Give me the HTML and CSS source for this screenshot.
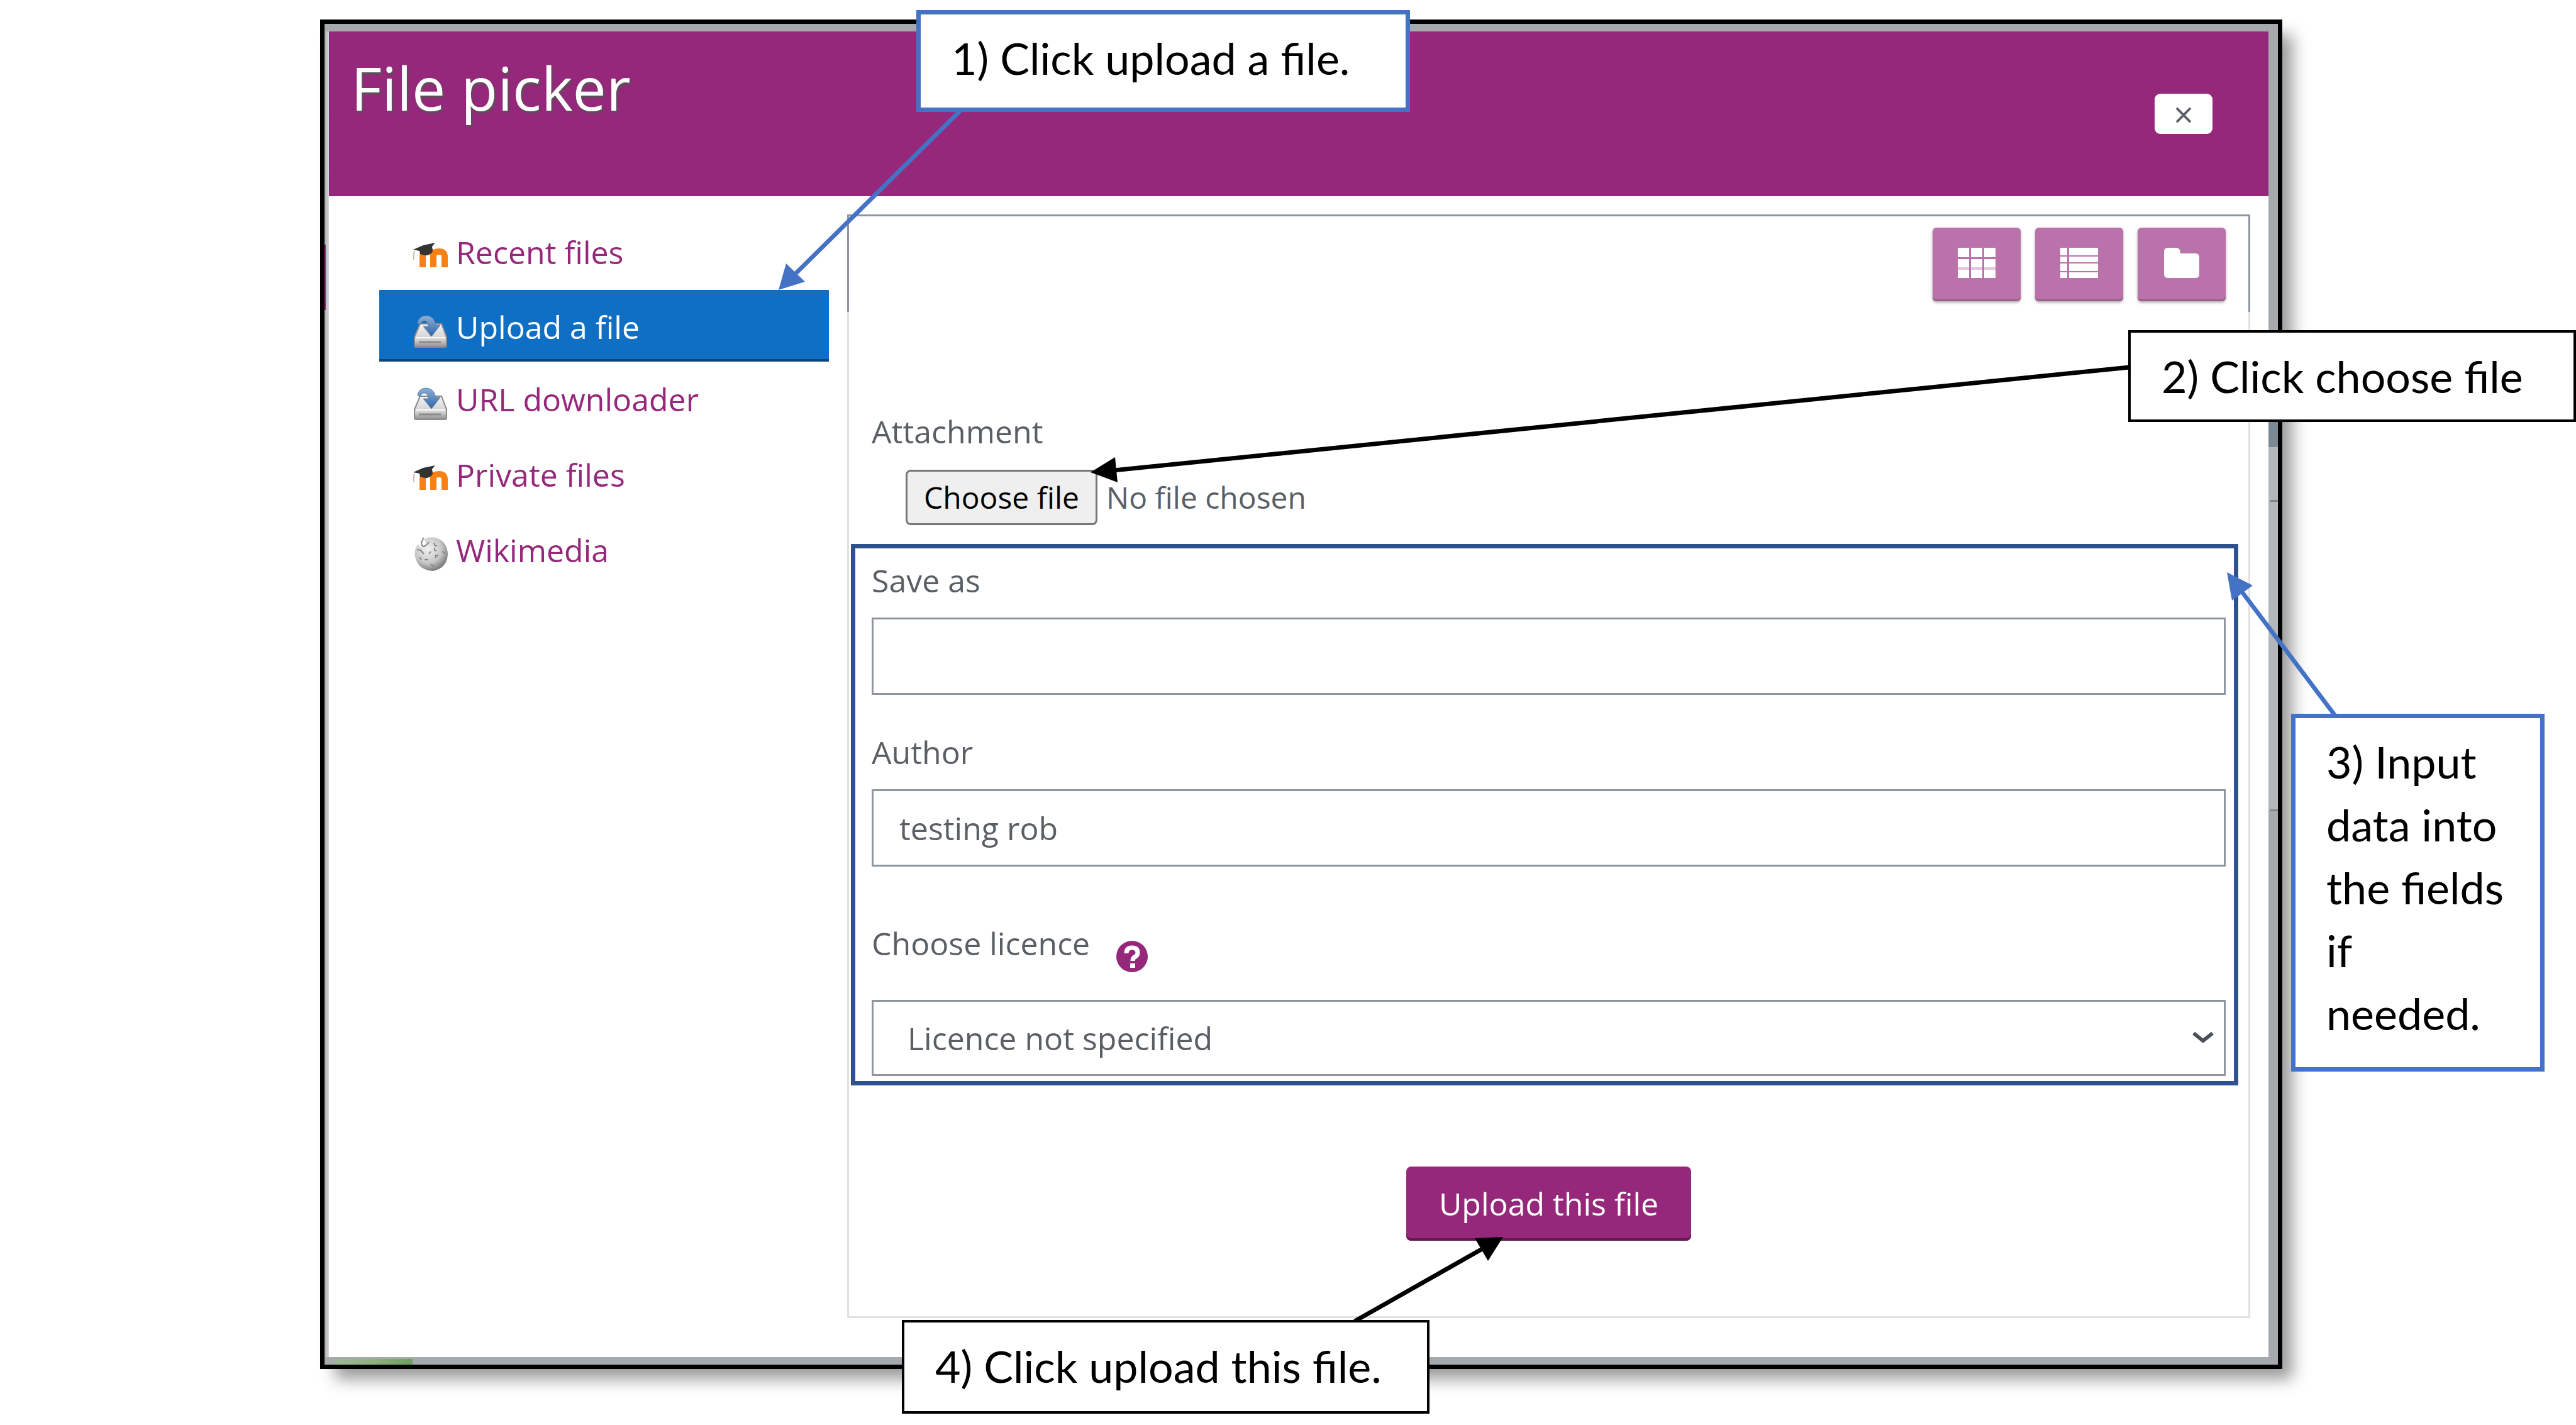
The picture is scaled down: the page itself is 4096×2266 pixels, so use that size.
FILE: index.html
```html
<!DOCTYPE html>
<html lang="en">
<head>
<meta charset="utf-8">
<title>File picker</title>
<link rel="stylesheet" href="styles.css">
</head>
<body>
<svg class="defs" aria-hidden="true">
  <defs>
    <linearGradient id="drive" x1="0" y1="0" x2="0" y2="1"><stop offset="0" stop-color="#f4f4f4"/><stop offset=".7" stop-color="#cfcfcf"/><stop offset="1" stop-color="#8d8d8d"/></linearGradient>
    <linearGradient id="arrow" x1="0" y1="0" x2="0" y2="1"><stop offset="0" stop-color="#8fb0d4"/><stop offset="1" stop-color="#2f64a8"/></linearGradient>
    <radialGradient id="globe" cx=".4" cy=".35" r=".7"><stop offset="0" stop-color="#f2f2f2"/><stop offset=".6" stop-color="#c6c6c6"/><stop offset="1" stop-color="#6e6e6e"/></radialGradient>
    <symbol id="moodle" viewBox="0 0 56 56">
      <path d="M15 46V29q0-9 9-9 8 0 8 9v17M32 46V29q0-8 9-8 9 0 9 8v17" fill="none" stroke="#f98012" stroke-width="10"/>
      <path d="M0 18 16 11 35 7 30 13 31 21Q26 28 18 27L11 25 10 20Z" fill="#333"/>
      <path d="M2 20Q0 28 1 34" fill="none" stroke="#d9b8a6" stroke-width="2"/>
    </symbol>
    <symbol id="drive-icon" viewBox="0 0 56 56">
      <path d="M11 17H45L53 38V51Q53 54 50 54H5Q2 54 2 51V38Z" fill="url(#drive)" stroke="#8a8a8a" stroke-width="2"/>
      <path d="M4 39H51" stroke="#fafafa" stroke-width="2"/>
      <path d="M9 46H44" stroke="#8c8c8c" stroke-width="3"/>
      <path d="M7 16Q8 5 20 4 33 4 36 19H43L29 37 16 21H24Q24 12 17 12 12 13 11 18Z" fill="url(#arrow)" stroke="#5c83b3" stroke-width="1"/>
    </symbol>
    <symbol id="wiki" viewBox="0 0 56 56">
      <path d="M18 4Q26 0 36 2 54 8 55 28 54 50 32 55 8 54 3 32 1 20 8 12L12 18 20 14Z" fill="url(#globe)"/>
      <path d="M17 2Q10 12 16 16 22 14 25 9M6 21l6 1 5 6M33 10q1 6 5 5M34 18q-1 5 3 5M40 31q-6-3-4 3M18 37h6M28 24l-3 4M46 24l5 3M28 44l5 4M10 33l3 4" fill="none" stroke="#858585" stroke-width="2"/>
    </symbol>
  </defs>
</svg>
<div class="stage">
  <main class="picker">
    <header class="picker-head">
      <h1>File picker</h1>
      <button class="close" type="button" aria-label="Close">×</button>
    </header>
    <div class="picker-body">
      <nav class="repos" aria-label="Repositories">
        <a class="repo" href="#recent"><svg><use href="#moodle"/></svg>Recent files</a>
        <a class="repo active" href="#upload"><svg><use href="#drive-icon"/></svg>Upload a file</a>
        <a class="repo" href="#url"><svg><use href="#drive-icon"/></svg>URL downloader</a>
        <a class="repo" href="#private"><svg><use href="#moodle"/></svg>Private files</a>
        <a class="repo" href="#wikimedia"><svg><use href="#wiki"/></svg>Wikimedia</a>
      </nav>
      <section class="panel">
        <div class="toolbar">
          <button type="button" aria-label="Icon view"><svg viewBox="0 0 60 48"><path d="M0 0h18v15H0zM21 0h18v15H21zM42 0h18v15H42zM0 18h18v13H0zM21 18h18v13H21zM42 18h18v13H42zM0 35h18v13H0zM21 35h18v13H21zM42 35h18v13H42z"/><path opacity=".6" d="M0 31h18v4H0zM21 31h18v4H21zM42 31h18v4H42z"/></svg></button>
          <button type="button" aria-label="List view"><svg viewBox="0 0 60 48"><path d="M0 0h11v12H0zM14 0h46v12H14zM0 14h11v9H0zM14 14h46v9H14zM0 25h11v12H0zM14 25h46v12H14zM0 39h11v9H0zM14 39h46v9H14z"/></svg></button>
          <button type="button" aria-label="Tree view"><svg viewBox="0 0 60 48"><path d="M2 6q0-6 6-6h13q7 0 7 9h24q6 0 6 6v27q0 6-6 6H8q-6 0-6-6z"/></svg></button>
        </div>
        <form class="upload">
          <label class="attachment" for="file">Attachment</label>
          <div class="chooser">
            <input id="file" class="visually-hidden" type="file">
            <label class="choose" for="file">Choose file</label>
            <span>No file chosen</span>
          </div>
          <div class="fields">
            <div class="field">
              <label for="saveas">Save as</label>
              <input id="saveas" type="text">
            </div>
            <div class="field">
              <label for="author">Author</label>
              <input id="author" type="text" value="testing rob">
            </div>
            <div class="field licence">
              <div class="label-row">
                <label for="licence">Choose licence</label>
                <svg class="help" viewBox="0 0 50 50" role="img" aria-label="Help"><circle cx="25" cy="25" r="25" fill="#95287a"/><path d="M16 20Q16 11 25 11 34 11 34 19 34 24 29 26 26 28 26 32" fill="none" stroke="#fff" stroke-width="7"/><path d="M22 36h8v7h-8z" fill="#fff"/></svg>
              </div>
              <div class="select-wrap">
                <select id="licence"><option>Licence not specified</option></select>
                <svg viewBox="0 0 36 22" aria-hidden="true"><path d="M3 4 18 16 33 4" fill="none" stroke="#495057" stroke-width="6"/></svg>
              </div>
            </div>
          </div>
          <button class="submit" type="submit">Upload this file</button>
        </form>
      </section>
    </div>
  </main>

  <svg class="arrows" viewBox="0 0 4096 2266" aria-hidden="true">
    <g fill="#4472c4" stroke="#4472c4">
      <path d="M1527 176 1262 438M3713 1138 3564 940" stroke-width="7"/>
      <path d="M1238 461 1250 419 1280 448ZM3541 910 3582 931 3549 955Z" stroke="none"/>
    </g>
    <g fill="#000" stroke="#000">
      <path d="M3386 584 1770 748M2154 2101 2362 1983" stroke-width="7"/>
      <path d="M1734 751 1773 727 1777 767ZM2390 1967 2345 1969 2366 2005Z" stroke="none"/>
    </g>
  </svg>
  <p class="callout blue step1">1) Click upload a file.</p>
  <p class="callout step2">2) Click choose file</p>
  <p class="callout blue step3">3) Input<br>data into<br>the fields<br>if<br>needed.</p>
  <p class="callout step4">4) Click upload this file.</p>
</div>
</body>
</html>
```
FILE: styles.css
```css
* { box-sizing: border-box; }

body {
  margin: 0;
  background: #fff;
  color: #5a5f65;
  font: 50px/68px "Open Sans", sans-serif;
}

button, input, select { font: inherit; color: inherit; }

.defs { position: absolute; width: 0; height: 0; }

.stage {
  position: relative;
  min-height: 100vh;
  padding: 31px 467px 88px 509px;
  overflow: hidden;
}

/* Dialog frame; the gutter shows slivers of the dimmed page behind it */
.picker {
  padding: 12px 15px 12px 7px;
  border: 7px solid #000;
  background:
    linear-gradient(90deg, #9db89a, #8fb07f 50%, #6d9f60) 16px 100% / 124px 9px no-repeat,
    linear-gradient(#95287a, #95287a) 0 351px / 2px 104px no-repeat,
    linear-gradient(#7b8995, #7b8995) 100% 517px / 15px 156px no-repeat,
    linear-gradient(#7e858c, #7e858c) 100% 757px / 13px 3px no-repeat,
    linear-gradient(#7e858c, #7e858c) 100% 1249px / 13px 3px no-repeat,
    linear-gradient(#b3b7ba, #b3b7ba) 100% 673px / 15px 577px no-repeat,
    linear-gradient(90deg, #aaa, #d8d8dc) 0 12px / 7px 2108px no-repeat,
    #a6aaad;
  box-shadow: 20px 20px 24px -4px rgba(0, 0, 0, .4);
}

.picker-head {
  display: flex;
  justify-content: space-between;
  align-items: flex-start;
  min-height: 262px;
  padding: 25px 89px 0 35px;
  background: #95287a;
}

.picker-head h1 {
  margin: 0;
  color: #fff;
  font-size: 95px;
  font-weight: 400;
  line-height: 128px;
  text-shadow: 2px 3px 3px #555;
}

.close {
  width: 92px;
  height: 64px;
  margin-top: 74px;
  padding: 0;
  border: 0;
  border-radius: 9px;
  background: #fff;
  font-size: 56px;
  line-height: 64px;
}

.picker-body {
  display: grid;
  grid-template-columns: 715px 1fr;
  gap: 29px;
  padding: 29px 29px 62px 80px;
  background: #fff;
}

.repo {
  display: flex;
  align-items: center;
  gap: 12px;
  padding: 26px 0 26px 54px;
  color: #95287a;
  text-decoration: none;
}

.repo svg {
  width: 56px;
  height: 56px;
  margin-top: 12px;
}

.repo.active {
  padding: 25px 0 17px 54px;
  border-bottom: 4px solid #0b4479;
  background: #0f6fc5;
  color: #fff;
}

.panel {
  border: 3px solid #e1e1e1;
  border-top: 0;
}

.toolbar {
  display: flex;
  justify-content: flex-end;
  gap: 23px;
  margin: 0 -3px;
  padding: 18px 36px 17px;
  border: 3px solid #8f959e;
  border-bottom: 0;
}

.toolbar button {
  display: grid;
  place-items: center;
  width: 140px;
  height: 117px;
  padding: 0 0 6px;
  border: 0;
  border-radius: 6px;
  background: #ba72aa;
  box-shadow: inset 0 -3px #9c5f8e, 0 2px 4px rgba(0, 0, 0, .35);
}

.toolbar svg {
  width: 60px;
  height: 48px;
  fill: #fff;
}

.upload {
  display: flex;
  flex-direction: column;
  padding: 156px 16px 120px 3px;
}

.attachment { padding-left: 33px; }

.chooser {
  display: flex;
  align-items: center;
  gap: 14px;
  margin: 27px 0 30px;
  padding-left: 87px;
  font-size: 48px;
}

.visually-hidden {
  position: absolute;
  width: 1px;
  height: 1px;
  opacity: 0;
}

.choose {
  padding: 7px 26px;
  border: 3px solid #767676;
  border-radius: 8px;
  background: #efefef;
  color: #000;
}

.fields {
  display: flex;
  flex-direction: column;
  gap: 57px;
  padding: 17px 13px 8px 26px;
  border: 7px solid #2f528f;
}

.field {
  display: flex;
  flex-direction: column;
  gap: 25px;
}

.field.licence {
  gap: 56px;
  padding-top: 31px;
}

.field input,
.field select {
  width: 100%;
  height: 123px;
  padding: 0 41px;
  border: 3px solid #8f959e;
  border-radius: 0;
  background: #fff;
}

.field select {
  display: block;
  height: 121px;
  padding: 0 54px;
  appearance: none;
}

.label-row {
  display: flex;
  align-items: center;
  gap: 42px;
}

.help {
  width: 50px;
  height: 50px;
  margin-top: 30px;
  margin-bottom: -12px;
}

.select-wrap { position: relative; }

.select-wrap svg {
  position: absolute;
  top: 49px;
  right: 18px;
  width: 36px;
  height: 22px;
}

.submit {
  align-self: center;
  height: 118px;
  margin: 129px 0 0 13px;
  padding: 0 52px;
  border: 0;
  border-radius: 8px;
  background: #95287a;
  box-shadow: inset 0 -4px #631a51;
  color: #fff;
}

/* Numbered instructions laid over the dialog */
.arrows {
  position: absolute;
  top: 0;
  left: 0;
  width: 100%;
  pointer-events: none;
}

.callout {
  position: absolute;
  margin: 0;
  padding: 19px 0 0 49px;
  border: 4px solid #000;
  background: #fff;
  color: #000;
  font: 70px/100px Lato, sans-serif;
  white-space: nowrap;
}

.callout.blue { border: 7px solid #4472c4; }

.step1 { top: 16px; left: 1457px; width: 785px; height: 162px; }
.step2 { top: 525px; left: 3384px; width: 712px; height: 146px; }
.step3 { top: 1135px; left: 3643px; width: 403px; height: 569px; }
.step4 { top: 2099px; left: 1434px; width: 839px; height: 149px; }
```
